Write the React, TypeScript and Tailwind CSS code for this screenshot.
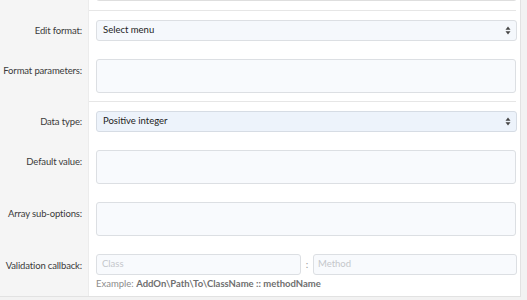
import type { ReactNode } from 'react'

const font = { fontFamily: 'Lato, "Noto Sans", sans-serif' }

function SelectArrows() {
  return (
    <svg width="6" height="9" viewBox="0 0 6 9" className="flex-shrink-0">
      <path d="M3 0.5 L5.5 3.8 L0.5 3.8 Z" fill="#444" />
      <path d="M3 8.5 L5.5 5.2 L0.5 5.2 Z" fill="#444" />
    </svg>
  )
}

function Row({ label, children, labelTop = false, className = '' }: { label: string; children: ReactNode; labelTop?: boolean; className?: string }) {
  return (
    <div className="flex">
      <div
        className={`w-[89px] flex-shrink-0 bg-[#f5f5f5] border-r border-[#ececec] pr-[6px] text-right text-[9.5px] tracking-[-0.15px] leading-[14px] text-[#3a3a3a] whitespace-nowrap flex justify-end ${
          labelTop ? 'items-start pt-[14px]' : 'items-center'
        }`}
      >
        {label}
      </div>
      <div className={`flex-1 min-w-0 pl-[7px] pr-[3px] ${className}`}>{children}</div>
    </div>
  )
}

function Divider() {
  return (
    <div className="flex">
      <div className="w-[89px] bg-[#f5f5f5] border-r border-[#ececec]" />
      <div className="flex-1 pr-[4px]">
        <div className="h-px bg-[#e6e6e6]" />
      </div>
    </div>
  )
}

export default function App() {
  return (
    <div style={font} className="w-[527px] h-[300px] overflow-hidden bg-[#f2f2f2]">
      <div className="w-[521px] bg-white border-r border-b border-[#e2e2e2] mt-[-30px]">
        {/* row cut off at the top */}
        <Row label="" className="pt-[9px] pb-[9px]">
          <div className="h-[22px] rounded-[3px] border border-[#dedede] bg-[#f8fafd]" />
        </Row>

        <Divider />

        <Row label="Edit format:" className="py-[9px]">
          <div className="h-[21px] rounded-[3px] border border-[#dcdfe3] bg-[#f5f8fc] flex items-center justify-between pl-[6px] pr-[5px] text-[9.5px] text-[#222]">
            <span>Select menu</span>
            <SelectArrows />
          </div>
        </Row>

        <Row label="Format parameters:" labelTop className="pt-[9px] pb-[8px]">
          <div className="h-[34px] rounded-[3px] border border-[#dcdfe3] bg-[#f8fafd] mr-px" />
        </Row>

        <Divider />

        <Row label="Data type:" className="py-[9px]">
          <div className="h-[21px] rounded-[3px] border border-[#d6dce4] bg-[#edf3fb] flex items-center justify-between pl-[6px] pr-[5px] text-[9.5px] text-[#222]">
            <span>Positive integer</span>
            <SelectArrows />
          </div>
        </Row>

        <Row label="Default value:" labelTop className="py-[9px]">
          <div className="h-[34px] rounded-[3px] border border-[#dcdfe3] bg-[#f8fafd] mr-px" />
        </Row>

        <Row label="Array sub-options:" labelTop className="py-[9px]">
          <div className="h-[34px] rounded-[3px] border border-[#dcdfe3] bg-[#f8fafd] mr-px" />
        </Row>

        <Row label="Validation callback:" labelTop className="pt-[9px] pb-[6px]">
          <div className="flex items-center">
            <div className="flex-1 h-[21px] rounded-[3px] border border-[#dcdfe3] bg-[#f8fafd] flex items-center pl-[5px] text-[9.5px] text-[#c4c7cb]">
              Class
            </div>
            <span className="w-[12px] text-center text-[10px] text-[#9a9a9a]">:</span>
            <div className="flex-1 h-[21px] rounded-[3px] border border-[#dcdfe3] bg-[#f8fafd] flex items-center pl-[4px] text-[9.5px] text-[#c4c7cb]">
              Method
            </div>
          </div>
          <p className="mt-[3px] text-[9.5px] leading-[12px] text-[#8c8c8c]">
            Example: <b className="font-bold text-[#6f6f6f]">AddOn\Path\To\ClassName :: methodName</b>
          </p>
        </Row>
      </div>
    </div>
  )
}
